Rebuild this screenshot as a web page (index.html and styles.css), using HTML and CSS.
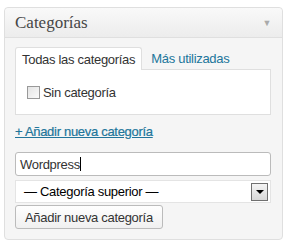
FILE: index.html
```html
<!DOCTYPE html>
<html lang="es">
<head>
    <meta charset="UTF-8">
    <title>Categorías</title>
    <link rel="stylesheet" href="styles.css">
</head>
<body>
    <div class="postbox">
        <div class="hndle">
            <span class="hndle-title">Categorías</span>
            <span class="toggle">&#9660;</span>
        </div>
        <div class="inside">
            <ul class="tabs">
                <li class="tab active">Todas las categorías</li>
                <li class="tab"><a href="#">Más utilizadas</a></li>
            </ul>
            <div class="tabs-panel">
                <label class="cat-item"><span class="checkbox"></span>Sin categoría</label>
            </div>
            <a class="add-toggle" href="#">+ Añadir nueva categoría</a>
            <div class="add-form">
                <div class="text-input">Wordpress<span class="caret"></span></div>
                <div class="select">
                    <span>— Categoría superior —</span>
                    <span class="select-arrow"></span>
                </div>
                <button class="button">Añadir nueva categoría</button>
            </div>
        </div>
    </div>
</body>
</html>
```

FILE: styles.css
```css
body {
    margin: 0;
    background-color: #fff;
    font-family: 'Liberation Sans', Arial, sans-serif;
    font-size: 13px;
    letter-spacing: -0.3px;
    color: #333;
}
.postbox {
    margin: 7px 0 0 4px;
    width: 279px;
    height: 233px;
    box-sizing: border-box;
    border: 1px solid #dfdfdf;
    border-radius: 4px;
    background-color: #f5f5f5;
}
.hndle {
    display: flex;
    align-items: center;
    justify-content: space-between;
    height: 29px;
    padding: 0 11px 0 10px;
    border-bottom: 1px solid #dfdfdf;
    border-radius: 4px 4px 0 0;
    background: linear-gradient(to bottom, #f9f9f9, #ececec);
}
.hndle-title {
    font-family: 'Liberation Serif', Georgia, serif;
    font-size: 17px;
    letter-spacing: 0;
    color: #464646;
    padding-top: 1px;
}
.toggle {
    font-size: 9px;
    color: #aaa;
}
.inside {
    padding: 9px 11px 0 10px;
}
.tabs {
    display: flex;
    list-style: none;
    margin: 0;
    padding: 0;
}
.tab {
    padding: 4px 6px 3px 6px;
}
.tab.active {
    background-color: #fff;
    border: 1px solid #dfdfdf;
    border-bottom: none;
    border-radius: 3px 3px 0 0;
    margin-bottom: -1px;
    position: relative;
}
.tab a {
    color: #21759b;
    text-decoration: none;
    padding-left: 3px;
}
.tabs-panel {
    background-color: #fff;
    border: 1px solid #dfdfdf;
    padding: 15px 11px 0;
    box-sizing: border-box;
    height: 46px;
}
.cat-item {
    display: flex;
    align-items: center;
    gap: 3px;
}
.checkbox {
    width: 11px;
    height: 11px;
    border: 1px solid #999;
    background: linear-gradient(to bottom right, #e4e4e4, #fafafa);
}
.add-toggle {
    display: inline-block;
    margin-top: 9px;
    color: #21759b;
    text-decoration: underline;
    -webkit-text-stroke: 0.2px #21759b;
}
.add-form {
    display: flex;
    flex-direction: column;
    align-items: flex-start;
    margin-top: 13px;
}
.text-input {
    width: 256px;
    height: 24px;
    box-sizing: border-box;
    border: 1px solid #bbb;
    border-radius: 3px;
    background-color: #fff;
    padding: 3px 4px;
    color: #333;
    display: flex;
    align-items: center;
}
.caret {
    width: 1px;
    height: 14px;
    background-color: #000;
}
.select {
    margin-top: 4px;
    width: 256px;
    height: 23px;
    box-sizing: border-box;
    border: 1px solid #e4e4e4;
    background-color: #fff;
    display: flex;
    align-items: center;
    justify-content: space-between;
    padding: 0 2px 0 8px;
    color: #000;
}
.select-arrow {
    width: 15px;
    height: 16px;
    border: 1px solid #707070;
    background: linear-gradient(to bottom, #f4f4f4, #d8d8d8);
    position: relative;
}
.select-arrow::after {
    content: "";
    position: absolute;
    left: 4px;
    top: 6px;
    border-left: 4px solid transparent;
    border-right: 4px solid transparent;
    border-top: 4px solid #000;
}
.button {
    margin-top: 2px;
    height: 24px;
    padding: 0 9px;
    font-family: 'Liberation Sans', Arial, sans-serif;
    font-size: 13px;
    letter-spacing: -0.3px;
    color: #333;
    border: 1px solid #bbb;
    border-radius: 3px;
    background: linear-gradient(to bottom, #fefefe, #f0f0f0);
}
```
